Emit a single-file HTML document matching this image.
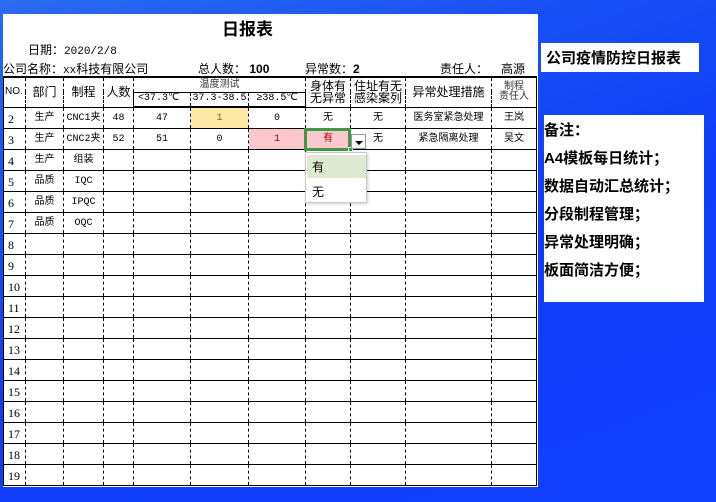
<!DOCTYPE html>
<html><head><meta charset="utf-8"><style>
*{margin:0;padding:0;box-sizing:border-box}
body{width:716px;height:502px;overflow:hidden;position:relative;font-family:"Liberation Sans","Noto Sans CJK SC",sans-serif;
background:linear-gradient(160deg,#2a6cf0 0%,#1a52f5 25%,#0f3cf8 55%,#1040ff 100%);}
.sheet{position:absolute;left:3px;top:14px;width:535px;height:473px;background:#fff}
.t{position:absolute;font-size:12px;color:#000;white-space:nowrap}
table{position:absolute;left:3px;top:76px;border-collapse:collapse;table-layout:fixed;font-family:"Liberation Mono","Noto Sans CJK SC",monospace}
td{border-top:1px solid #000;border-bottom:1px solid #000;border-left:1px dashed #000;border-right:1px dashed #000;height:21px;font-size:10px;text-align:center;padding:3px 0 0 0;white-space:nowrap;overflow:hidden;line-height:1;vertical-align:middle}
td:first-child{border-left:1px solid #000;text-align:left;padding-left:4px;font-family:"Liberation Serif",serif;font-size:12px}
td:last-child{border-right:1px solid #000}
.hd td{font-family:"Liberation Sans","Noto Sans CJK SC",sans-serif;font-size:12px;line-height:1;height:15px;padding-top:0}
tr.top td{border-top:2px solid #000}
tr.hb td{border-bottom:2px solid #000}
.box{position:absolute;background:#fff;font-weight:bold;color:#000;font-family:"Liberation Sans","Noto Sans CJK SC",sans-serif}
</style></head><body>
<div class="sheet"></div>
<div class="t" style="left:222px;top:15px;font-size:17px;font-weight:bold">日报表</div>
<div class="t" style="left:28px;top:41px">日期：<span style="font-family:'Liberation Mono',monospace;font-size:11px">2020/2/8</span></div>
<div class="t" style="left:3px;top:60px">公司名称：<span style="font-family:'Liberation Mono',monospace;font-size:11px">xx</span>科技有限公司</div>
<div class="t" style="left:198px;top:60px">总人数： <b>100</b></div>
<div class="t" style="left:305px;top:60px">异常数：<b>2</b></div>
<div class="t" style="left:440px;top:60px">责任人：</div>
<div class="t" style="left:501px;top:60px">高源</div>
<table>
<colgroup><col style="width:22px"><col style="width:38px"><col style="width:40px"><col style="width:30px"><col style="width:57px"><col style="width:58px"><col style="width:57px"><col style="width:45px"><col style="width:55px"><col style="width:86px"><col style="width:45px"></colgroup>
<tr class="top hd"><td rowspan="2" style="font-size:10px;padding-left:1px">NO.</td><td rowspan="2">部门</td><td rowspan="2">制程</td><td rowspan="2">人数</td><td colspan="3" style="font-size:10px;color:#333">温度测试</td><td rowspan="2">身体有<br>无异常</td><td rowspan="2">住址有无<br>感染案列</td><td rowspan="2">异常处理措施</td><td rowspan="2" style="font-size:10px;color:#333">制程<br>责任人</td></tr>
<tr class="hb hd"><td style="font-size:10px;font-family:'Liberation Mono',monospace">&lt;37.3℃</td><td style="font-size:10px;font-family:'Liberation Mono',monospace">37.3-38.5</td><td style="font-size:10px;font-family:'Liberation Mono',monospace">≥38.5℃</td></tr>
<tr><td>2</td><td>生产</td><td>CNC1夹</td><td>48</td><td>47</td><td style="background:#fde9a5;color:#9c6500">1</td><td>0</td><td>无</td><td>无</td><td>医务室紧急处理</td><td>王岚</td></tr>
<tr><td>3</td><td>生产</td><td>CNC2夹</td><td>52</td><td>51</td><td>0</td><td style="background:#fdc7ce;color:#9c0006">1</td><td style="background:#fdc7ce;color:#9c0006">有</td><td>无</td><td>紧急隔离处理</td><td>吴文</td></tr>
<tr><td>4</td><td>生产</td><td>组装</td><td></td><td></td><td></td><td></td><td></td><td></td><td></td><td></td></tr>
<tr><td>5</td><td>品质</td><td>IQC</td><td></td><td></td><td></td><td></td><td></td><td></td><td></td><td></td></tr>
<tr><td>6</td><td>品质</td><td>IPQC</td><td></td><td></td><td></td><td></td><td></td><td></td><td></td><td></td></tr>
<tr><td>7</td><td>品质</td><td>OQC</td><td></td><td></td><td></td><td></td><td></td><td></td><td></td><td></td></tr>
<tr><td>8</td><td></td><td></td><td></td><td></td><td></td><td></td><td></td><td></td><td></td><td></td></tr>
<tr><td>9</td><td></td><td></td><td></td><td></td><td></td><td></td><td></td><td></td><td></td><td></td></tr>
<tr><td>10</td><td></td><td></td><td></td><td></td><td></td><td></td><td></td><td></td><td></td><td></td></tr>
<tr><td>11</td><td></td><td></td><td></td><td></td><td></td><td></td><td></td><td></td><td></td><td></td></tr>
<tr><td>12</td><td></td><td></td><td></td><td></td><td></td><td></td><td></td><td></td><td></td><td></td></tr>
<tr><td>13</td><td></td><td></td><td></td><td></td><td></td><td></td><td></td><td></td><td></td><td></td></tr>
<tr><td>14</td><td></td><td></td><td></td><td></td><td></td><td></td><td></td><td></td><td></td><td></td></tr>
<tr><td>15</td><td></td><td></td><td></td><td></td><td></td><td></td><td></td><td></td><td></td><td></td></tr>
<tr><td>16</td><td></td><td></td><td></td><td></td><td></td><td></td><td></td><td></td><td></td><td></td></tr>
<tr><td>17</td><td></td><td></td><td></td><td></td><td></td><td></td><td></td><td></td><td></td><td></td></tr>
<tr><td>18</td><td></td><td></td><td></td><td></td><td></td><td></td><td></td><td></td><td></td><td></td></tr>
<tr><td>19</td><td></td><td></td><td></td><td></td><td></td><td></td><td></td><td></td><td></td><td></td></tr>
</table>
<div style="position:absolute;left:304px;top:128px;width:47px;height:23px;border:3px solid #3d9a44"></div>
<div style="position:absolute;left:348px;top:147px;width:5px;height:5px;background:#3d9a44;border:1px solid #fff"></div>
<div style="position:absolute;left:351px;top:134px;width:15px;height:15px;background:#fff;border:1px solid #999"><div style="position:absolute;left:3px;top:6px;width:0;height:0;border-left:4px solid transparent;border-right:4px solid transparent;border-top:4px solid #000"></div></div>
<div style="position:absolute;left:305px;top:152px;width:62px;height:51px;background:#fff;border:1px solid #c8c8c8;box-shadow:1px 1px 3px rgba(0,0,0,.2)">
<div style="position:absolute;left:1px;top:2px;width:59px;height:23px;background:#deead2"></div>
<div class="t" style="left:6px;top:5px">有</div><div class="t" style="left:6px;top:30px">无</div></div>
<div class="box" style="left:541px;top:43px;width:158px;height:29px;font-size:15px;padding:4px 0 0 5px">公司疫情防控日报表</div>
<div class="box" style="left:544px;top:115px;width:160px;height:187px;font-size:15px;line-height:28px;padding-top:2px">备注：<br>A4模板每日统计；<br>数据自动汇总统计；<br>分段制程管理；<br>异常处理明确；<br>板面简洁方便；</div>
</body></html>
